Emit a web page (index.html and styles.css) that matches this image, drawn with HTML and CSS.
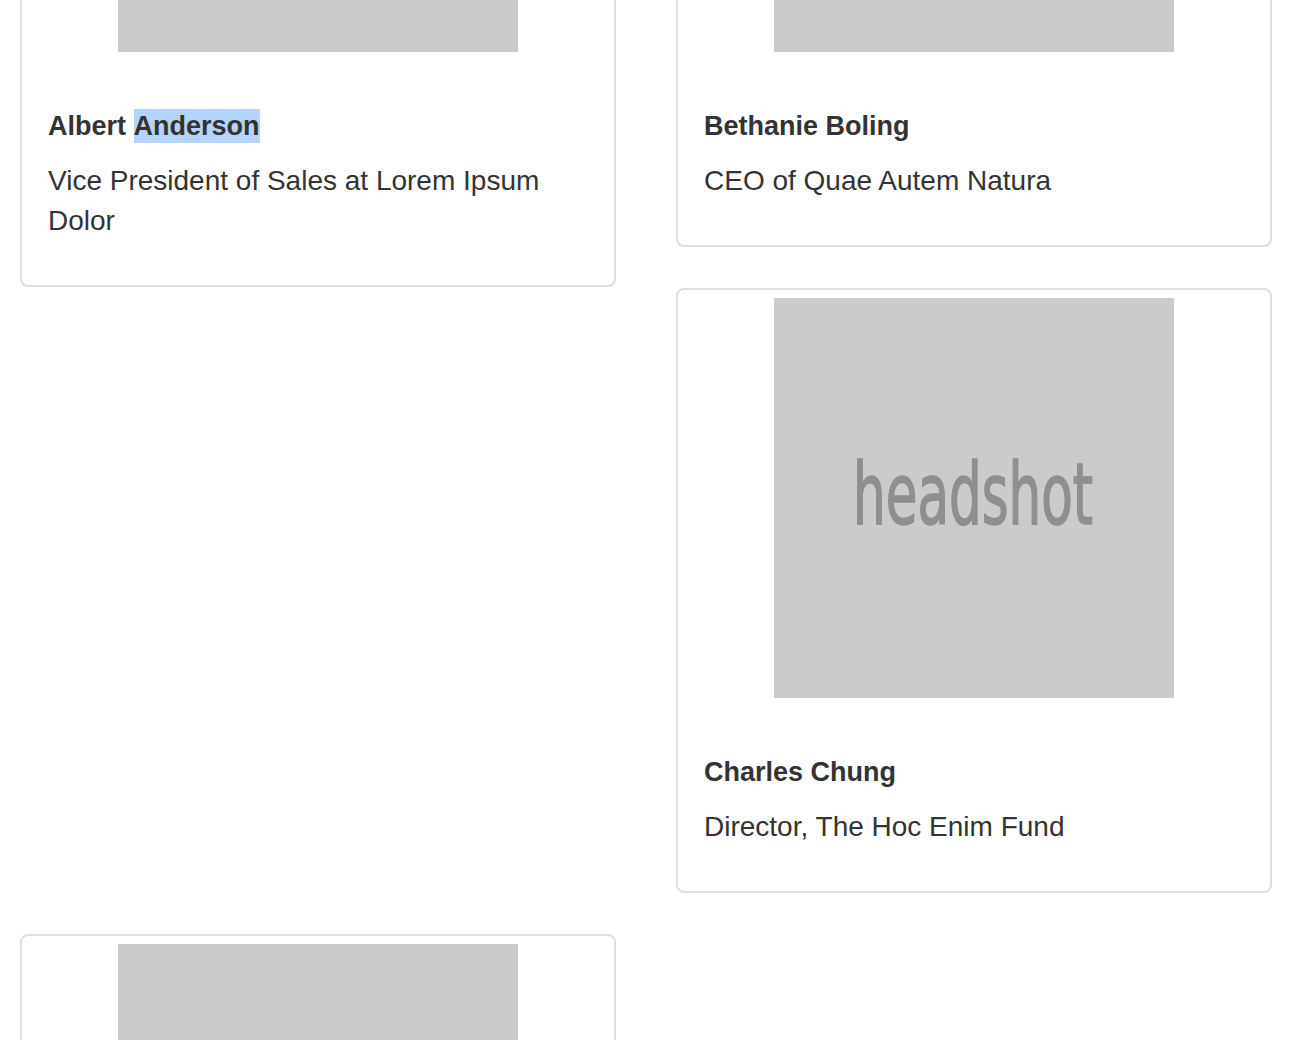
FILE: index.html
```html
<!DOCTYPE html>
<html lang="en">
<head>
<meta charset="utf-8">
<title>Team</title>
<link rel="stylesheet" href="styles.css">
</head>
<body>
<div class="team">
  <div class="thumb thumb-a">
    <svg class="headshot" width="400" height="400" viewBox="0 0 400 400"><rect width="400" height="400" fill="#cbcbcb"/><text x="79" y="226" textLength="240" lengthAdjust="spacingAndGlyphs" class="hs-text">headshot</text></svg>
    <div class="caption">
      <h4 class="name">Albert <span class="sel">Anderson</span></h4>
      <p class="role">Vice President of Sales at Lorem Ipsum Dolor</p>
    </div>
  </div>
  <div class="thumb thumb-b">
    <svg class="headshot" width="400" height="400" viewBox="0 0 400 400"><rect width="400" height="400" fill="#cbcbcb"/><text x="79" y="226" textLength="240" lengthAdjust="spacingAndGlyphs" class="hs-text">headshot</text></svg>
    <div class="caption">
      <h4 class="name">Bethanie Boling</h4>
      <p class="role">CEO of Quae Autem Natura</p>
    </div>
  </div>
  <div class="thumb thumb-c">
    <svg class="headshot" width="400" height="400" viewBox="0 0 400 400"><rect width="400" height="400" fill="#cbcbcb"/><text x="79" y="226" textLength="240" lengthAdjust="spacingAndGlyphs" class="hs-text">headshot</text></svg>
    <div class="caption">
      <h4 class="name">Charles Chung</h4>
      <p class="role">Director, The Hoc Enim Fund</p>
    </div>
  </div>
  <div class="thumb thumb-d">
    <svg class="headshot" width="400" height="400" viewBox="0 0 400 400"><rect width="400" height="400" fill="#cbcbcb"/><text x="79" y="226" textLength="240" lengthAdjust="spacingAndGlyphs" class="hs-text">headshot</text></svg>
    <div class="caption">
      <h4 class="name">Dana Delgado</h4>
      <p class="role">Partner, Lorem Ipsum Group</p>
    </div>
  </div>
</div>
</body>
</html>
```
FILE: styles.css
```css
html, body {
  margin: 0;
  padding: 0;
  background: #fff;
  overflow: hidden;
}

body {
  font-family: "Liberation Sans", Helvetica, Arial, sans-serif;
  color: #333;
}

.team {
  display: grid;
  grid-template-columns: 596px 596px;
  column-gap: 60px;
  align-items: start;
  margin: -358px 0 0 20px;
}

.thumb {
  box-sizing: border-box;
  border: 2px solid #dedede;
  border-radius: 8px;
  padding: 8px;
  margin-bottom: 41px;
  background: #fff;
}

.thumb-a { grid-column: 1; grid-row: 1 / span 2; }
.thumb-b { grid-column: 2; grid-row: 1; }
.thumb-c { grid-column: 2; grid-row: 2; }
.thumb-d { grid-column: 1; grid-row: 3; }

.headshot {
  display: block;
  margin: 0 auto;
}

.hs-text {
  font-family: "DejaVu Sans Condensed", "DejaVu Sans", sans-serif;
  font-weight: normal;
  font-size: 86px;
  fill: #8f8f8f;
  stroke: #8f8f8f;
  stroke-width: 1.6px;
  filter: blur(0.6px);
}

.caption {
  padding: 18px;
}

.name {
  margin: 39px 0 18px;
  font-size: 27px;
  line-height: 34px;
  font-weight: bold;
}

.sel {
  display: inline-block;
  background: #b3d4fc;
}

.role {
  margin: 0 0 18px;
  font-size: 28px;
  line-height: 40px;
}
```
